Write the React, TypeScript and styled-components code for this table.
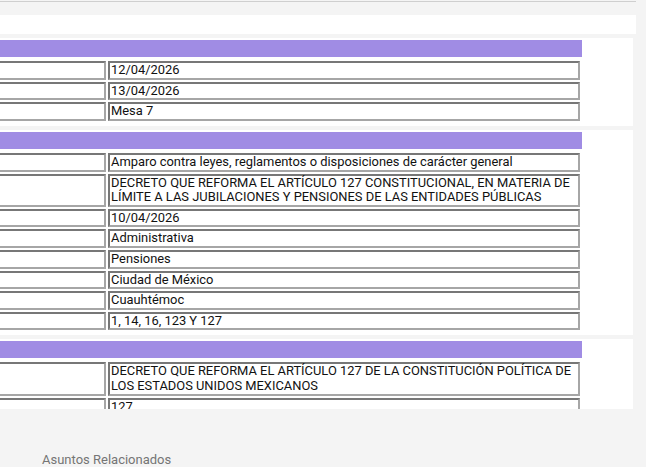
import React from "react";
import styled, { createGlobalStyle } from "styled-components";

const Global = createGlobalStyle`
  html, body { margin: 0; padding: 0; background: #f4f4f4; }
  body { font-family: Roboto, "Liberation Sans", Arial, sans-serif; overflow: hidden; }
`;

const Page = styled.div`
  width: 646px;
  height: 467px;
  display: flex;
  flex-direction: column;
  background: #f4f4f4;
  overflow: hidden;
`;

const TopRule = styled.div`
  width: 636px;
  height: 1px;
  margin-top: 1px;
  background: #cfcfcf;
  flex: none;
`;

const Viewport = styled.div`
  margin-top: 13px;
  height: 394.3px;
  flex: none;
  overflow: hidden;
`;

const Track = styled.div`
  margin-left: -100px;
  display: flex;
  flex-direction: column;
  gap: 3.5px;
`;

const WhiteBar = styled.div`
  width: 736px;
  height: 19.3px;
  background: #ffffff;
`;

const Panel = styled.section`
  width: 733px;
  background: #ffffff;
  padding: 2px 0 3px 3px;
  box-sizing: border-box;
`;

const Heading = styled.div`
  width: 679px;
  height: 17.5px;
  background: #a08ce4;
  margin-bottom: 2px;
`;

const Table = styled.table`
  width: 679px;
  border-collapse: separate;
  border-spacing: 2px;
  table-layout: fixed;
  font-family: Roboto, "Liberation Sans", Arial, sans-serif;
  font-size: 12.9px;
  color: #111;
`;

const Cell = styled.td<{ $label?: boolean }>`
  width: ${(p) => (p.$label ? "196px" : "auto")};
  border: 2px solid;
  border-color: #777 #a6a6a6 #a6a6a6 #777;
  padding: 0 0 0 1px;
  line-height: 14.6px;
  vertical-align: top;
  background: #fff;
`;

const Footer = styled.div`
  margin-top: 43px;
  padding-left: 42px;
  font-family: Roboto, "Liberation Sans", Arial, sans-serif;
  font-size: 13px;
  color: #757575;
`;

const sections: string[][] = [
  ["12/04/2026", "13/04/2026", "Mesa 7"],
  [
    "Amparo contra leyes, reglamentos o disposiciones de carácter general",
    "DECRETO QUE REFORMA EL ARTÍCULO 127 CONSTITUCIONAL, EN MATERIA DE LÍMITE A LAS JUBILACIONES Y PENSIONES DE LAS ENTIDADES PÚBLICAS",
    "10/04/2026",
    "Administrativa",
    "Pensiones",
    "Ciudad de México",
    "Cuauhtémoc",
    "1, 14, 16, 123 Y 127",
  ],
  [
    "DECRETO QUE REFORMA EL ARTÍCULO 127 DE LA CONSTITUCIÓN POLÍTICA DE LOS ESTADOS UNIDOS MEXICANOS",
    "127",
    "",
  ],
];

export default function App() {
  return (
    <Page>
      <Global />
      <TopRule />
      <Viewport>
        <Track>
          <WhiteBar />
          {sections.map((rows, i) => (
            <Panel key={i}>
              <Heading />
              <Table>
                <tbody>
                  {rows.map((v, j) => (
                    <tr key={j}>
                      <Cell $label />
                      <Cell>{v || "\u00a0"}</Cell>
                    </tr>
                  ))}
                </tbody>
              </Table>
            </Panel>
          ))}
        </Track>
      </Viewport>
      <Footer>Asuntos Relacionados</Footer>
    </Page>
  );
}
